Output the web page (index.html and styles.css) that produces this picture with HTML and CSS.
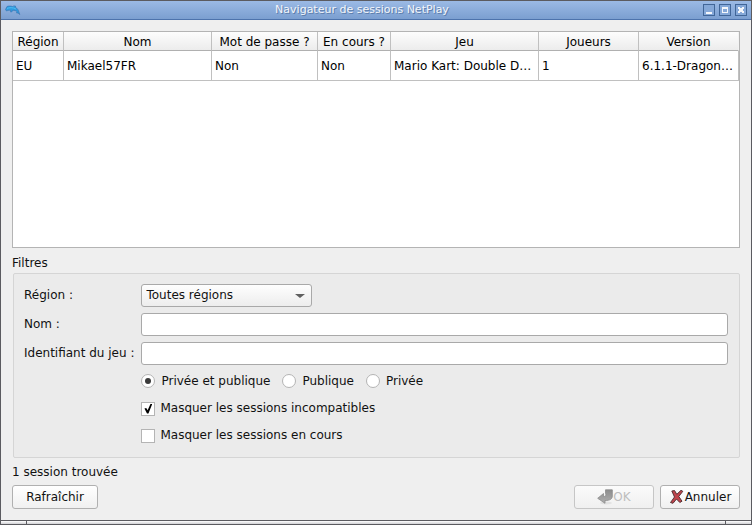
FILE: index.html
```html
<!DOCTYPE html>
<html lang="fr">
<head>
<meta charset="utf-8">
<title>Navigateur de sessions NetPlay</title>
<link rel="stylesheet" href="styles.css">
</head>
<body>
<div class="window">
  <header class="titlebar">
    <svg class="app-icon" width="16" height="16" viewBox="0 0 16 16" aria-hidden="true">
      <path d="M.5 7.500L2 4.500C4 3.800 6 4 7.500 4.500C8.500 3.800 9.500 3.800 10.500 4L10.500 5.300C12.500 6.500 13.300 8 13.500 9L14.800 12.500L13 11L11.500 11L12 9.500C11 8.500 9 8.200 7.500 8.500C7.500 9.800 6.500 10 5.500 10L6 8.500C4 8 2.500 8.500 1.500 9Z" fill="#2f9be0" stroke="#3a70ad" stroke-width=".6"/>
      <path d="M2 6.500C4 5.500 8 5.200 11 7" fill="none" stroke="#4fbdf2"/>
    </svg>
    <h1 class="title">Navigateur de sessions NetPlay</h1>
    <div class="window-buttons">
      <button type="button" class="window-button" aria-label="Réduire"><svg width="10" height="10" viewBox="0 0 10 10"><path d="M2 7h6v2h-6z" fill="#f4f6fa"/></svg></button>
      <button type="button" class="window-button" aria-label="Agrandir"><svg width="10" height="10" viewBox="0 0 10 10"><path d="M2 2h6v6h-6zM3 4v3h4v-3z" fill="#f4f6fa" fill-rule="evenodd"/></svg></button>
      <button type="button" class="window-button" aria-label="Fermer"><svg width="10" height="10" viewBox="0 0 10 10"><path d="M2 2h2v1h2v-1h2v2h-1v2h1v2h-2v-1h-2v1h-2v-2h1v-2h-1z" fill="#f4f6fa"/></svg></button>
    </div>
  </header>

  <main class="content">
    <div class="sessions">
      <table class="session-table">
        <thead>
          <tr><th class="col-region">Région</th><th class="col-name">Nom</th><th class="col-password">Mot de passe ?</th><th class="col-running">En cours ?</th><th class="col-game">Jeu</th><th class="col-players">Joueurs</th><th class="col-version">Version</th></tr>
        </thead>
        <tbody>
          <tr><td>EU</td><td>Mikael57FR</td><td>Non</td><td>Non</td><td>Mario Kart: Double D…</td><td>1</td><td>6.1.1-Dragon…</td></tr>
        </tbody>
      </table>
    </div>

    <h2 class="group-title">Filtres</h2>
    <form class="filters">
      <label for="region">Région :</label>
      <div class="combo"><select id="region"><option>Toutes régions</option></select></div>
      <label for="name">Nom :</label>
      <input id="name" class="field" type="text">
      <label for="game-id">Identifiant du jeu :</label>
      <input id="game-id" class="field" type="text">
      <div class="options">
        <div class="radios">
          <label class="choice"><input type="radio" name="visibility" checked>Privée et publique</label>
          <label class="choice"><input type="radio" name="visibility">Publique</label>
          <label class="choice"><input type="radio" name="visibility">Privée</label>
        </div>
        <label class="choice check"><input type="checkbox" checked>Masquer les sessions incompatibles</label>
        <label class="choice check"><input type="checkbox">Masquer les sessions en cours</label>
      </div>
    </form>

    <p class="status">1 session trouvée</p>
    <div class="actions">
      <button type="button" class="button refresh">Rafraîchir</button>
      <button type="button" class="button" disabled>
        <svg width="16" height="16" viewBox="0 0 16 16" aria-hidden="true">
          <defs><linearGradient id="arrow" x1="0" y1="0" x2="0" y2="1"><stop offset="0" stop-color="#8c8c8c"/><stop offset="1" stop-color="#b0b0b0"/></linearGradient></defs>
          <ellipse cx="9" cy="14" rx="6" ry="1.500" fill="#e2e2e2"/>
          <path d="M8.500 .8H15.300V7C15.300 10 13 11.500 8 11.500V14.300L.7 9.300L6.500 4.500V7.500C8.500 7.500 9.500 6.500 8.500 4.500Z" fill="url(#arrow)" stroke="#8c8c8c" stroke-width=".8"/>
        </svg>OK</button>
      <button type="button" class="button">
        <svg width="16" height="16" viewBox="0 0 16 16" aria-hidden="true">
          <path d="M2.800 2L5.500 1.500L7.800 5.300L12 1.300L13.800 2.300L9.800 7.500L13 12.200L10.800 13.500L7.500 10L4 14.300L1.500 13.500L5.500 8Z" fill="#c0444c" stroke="#4a2a2e" stroke-width=".9" stroke-linejoin="round"/>
        </svg>Annuler</button>
    </div>
  </main>
  <footer class="resize-bar"></footer>
</div>
</body>
</html>
```
FILE: styles.css
```css
* { box-sizing: border-box; }

body {
  margin: 0;
  background: #efefef;
  color: #111;
  font: 12px/15px "DejaVu Sans", sans-serif;
}

button, input, select { font: inherit; color: inherit; margin: 0; }
h1, h2, p { margin: 0; font-weight: normal; }

.window {
  display: flex;
  flex-direction: column;
  min-height: 100vh;
  border: 1px solid #5b5b60;
}

.titlebar {
  display: flex;
  align-items: center;
  height: 19px;
  padding: 0 4px;
  background: linear-gradient(#9bbae5, #7b9fd0);
  border-bottom: 1px solid #4d73ac;
}

.app-icon { display: block; }
.title {
  flex: 1;
  text-align: center;
  font-size: 11px;
  line-height: 16px;
  color: #f2f5fa;
  text-shadow: 1px 1px 0 #5c7dab;
}
.window-buttons { display: flex; gap: 4px; }

.window-button {
  display: block;
  width: 12px;
  height: 12px;
  padding: 0;
  border: 1px solid #416698;
  background: #85a8d8;
}
.window-button svg { display: block; }

.content {
  flex: 1;
  display: flex;
  flex-direction: column;
  padding: 11px;
}

.sessions { flex: 1; border: 1px solid #b4b4b4; background: #fff; }

.session-table {
  width: 100%;
  table-layout: fixed;
  border-collapse: separate;
  border-spacing: 0;
}
.session-table th,
.session-table td {
  overflow: hidden;
  white-space: nowrap;
  color: #000;
  border-right: 1px solid #c0c0c0;
  border-bottom: 1px solid #c0c0c0;
}
.session-table th {
  height: 19px;
  padding: 2px 0 0;
  font-weight: normal;
  background: linear-gradient(#fdfdfd, #ececec);
  border-bottom-color: #b0b0b0;
}
.session-table th:last-child { border-right-color: #f2f2f2; }
.session-table td { height: 30px; padding: 2px 3px 0; }
.col-region { width: 51px; }
.col-password { width: 106px; }
.col-running { width: 73px; }
.col-game { width: 148px; }
.col-players { width: 100px; }
.col-version { width: 100px; }

.group-title { margin: 8px 0 2px; font-size: 12px; }

.filters {
  display: grid;
  grid-template-columns: max-content 1fr;
  align-items: center;
  gap: 6px 7px;
  margin-left: 1px;
  padding: 10px 11px 8px 10px;
  border: 1px solid #d5d5d5;
  border-radius: 2px;
  background: #ebebeb;
}

.combo, .field {
  height: 23px;
  border: 1px solid #a9a9a9;
  border-radius: 3px;
}
.field { width: 100%; padding: 0 4px; background: #fff; }

.combo {
  position: relative;
  justify-self: start;
  width: 171px;
  background: linear-gradient(#fefefe, #ededed);
}
.combo select {
  appearance: none;
  display: block;
  width: 100%;
  height: 100%;
  padding: 0 24px 0 4px;
  border: 0;
  background: none;
}
.combo::after {
  content: "";
  position: absolute;
  top: 9px;
  right: 6px;
  border: solid transparent;
  border-width: 4px 5px 0;
  border-top-color: #606060;
  pointer-events: none;
}

.options { grid-column: 2; display: flex; flex-direction: column; align-items: flex-start; }
.radios { display: flex; gap: 12px; padding-bottom: 4px; }
.choice { display: flex; align-items: center; gap: 6px; height: 20px; }
.check { gap: 5px; height: 27px; }

.choice input {
  appearance: none;
  display: grid;
  place-items: center;
  width: 14px;
  height: 14px;
  border: 1px solid #b4b4b4;
  background: #fff;
}
.choice input[type="radio"] { border-radius: 50%; }
.choice input[type="radio"]:checked::before {
  content: "";
  width: 6px;
  height: 6px;
  border-radius: 50%;
  background: #3a3a3a;
}
.choice input[type="checkbox"]:checked::before {
  content: "";
  width: 8px;
  height: 10px;
  background: #000;
  clip-path: polygon(0 50%, 22% 45%, 40% 68%, 78% 0, 100% 0, 50% 100%, 32% 100%);
}

.status { margin: 7px 0 5px; }
.actions { display: flex; gap: 6px; }
.button {
  display: flex;
  align-items: center;
  justify-content: center;
  width: 80px;
  height: 24px;
  padding: 0;
  border: 1px solid #b0b0b0;
  border-radius: 3px;
  background: linear-gradient(#fff, #f0f0f0);
}
.button:disabled { color: #bebebe; border-color: #c6c6c6; background: linear-gradient(#fbfbfb, #f0f0f0); }
.refresh { width: 86px; margin-right: auto; }

.resize-bar {
  position: relative;
  height: 4px;
  border-top: 1px solid #5b5b60;
  background: linear-gradient(#fff, #d0d0d4);
}
.resize-bar::before {
  content: "";
  position: absolute;
  inset: 0 25px;
  border: solid #5b5b60;
  border-width: 0 1px;
}
```
